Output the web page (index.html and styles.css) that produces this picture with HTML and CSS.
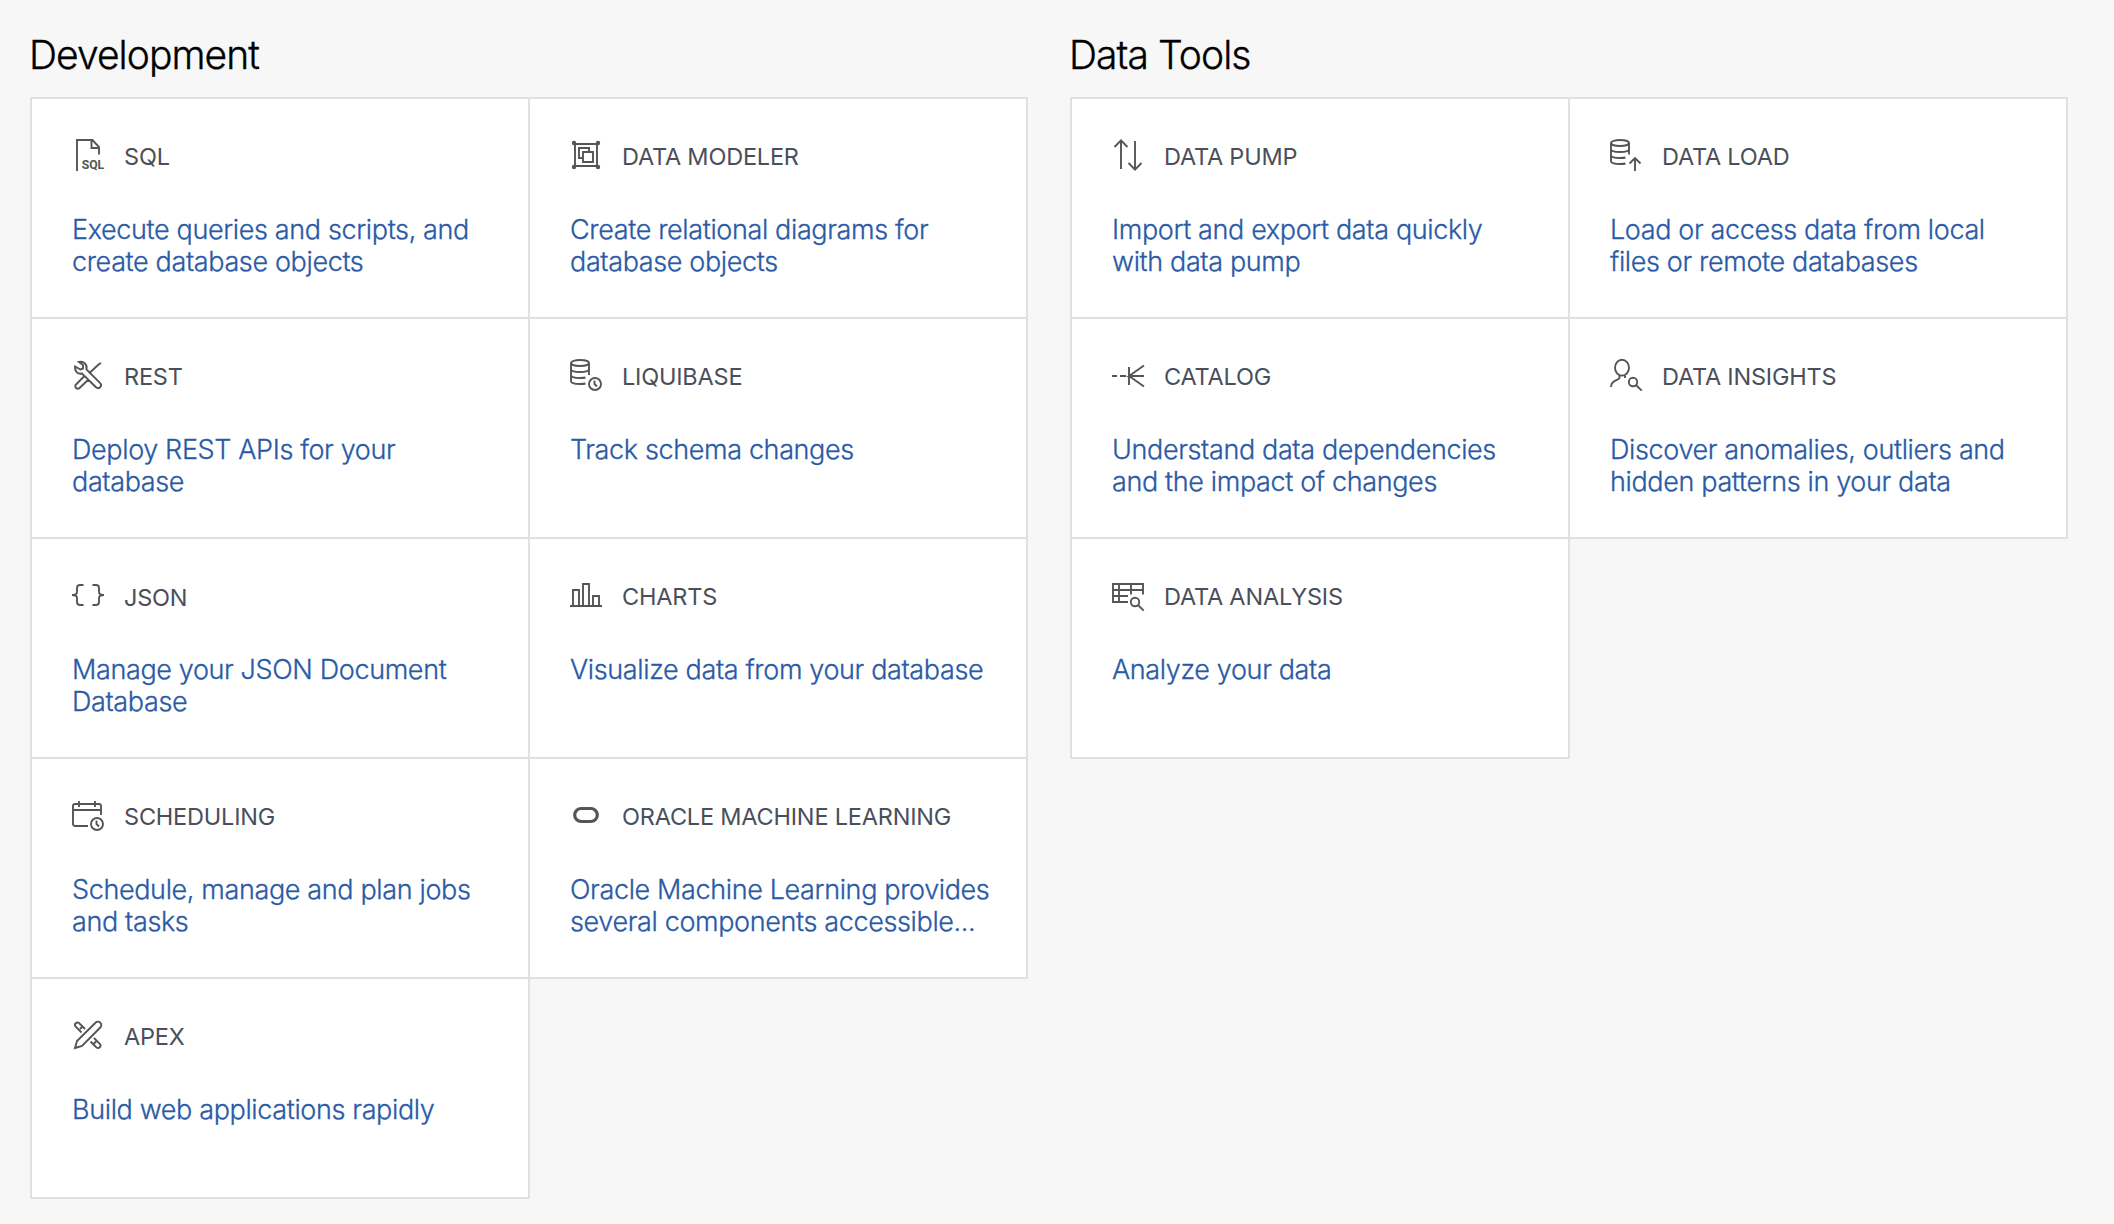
FILE: index.html
```html
<!DOCTYPE html>
<html lang="en">
<head>
<meta charset="utf-8">
<title>Database Actions</title>
<link rel="stylesheet" href="styles.css">
</head>
<body>
<main class="launchpad">
  <section class="group">
    <h2 class="group-title">Development</h2>
    <div class="cards">
      <a class="card">
        <div class="card-head">
          <svg class="icon" viewBox="0 0 32 32"><path d="M5 32V1h15.500L27 8v7.500M19.500 1v8H27"/><text class="icon-label" x="9.700" y="30" textLength="22.500" lengthAdjust="spacingAndGlyphs">SQL</text></svg>
          <span class="card-title">SQL</span>
        </div>
        <p class="card-text">Execute queries and scripts, and create database objects</p>
      </a>
      <a class="card">
        <div class="card-head">
          <svg class="icon" viewBox="0 0 32 32"><path d="M5 5h22v22H5zM13 19H9V9h10v4M13 13h10v10H13z"/><g class="solid"><circle cx="4" cy="4" r="2.200"/><circle cx="28" cy="4" r="2.200"/><circle cx="4" cy="28" r="2.200"/><circle cx="28" cy="28" r="2.200"/></g></svg>
          <span class="card-title">DATA MODELER</span>
        </div>
        <p class="card-text">Create relational diagrams for database objects</p>
      </a>
      <a class="card">
        <div class="card-head">
          <svg class="icon" viewBox="0 0 32 32"><path d="M7 3l4 3v3.500L8.500 10.500 3 7.500C2.500 12 5.500 15.500 10 14.500L24 28.200a2.800 2.800 0 0 0 4.200-4L14.500 10.500C15.500 5.500 12 2 7 3zM29 4l-2.500 1.500L17 14.500M12 17.500L4 25.500a2.300 2.300 0 0 0 3.500 3.500L16.500 20.500"/></svg>
          <span class="card-title">REST</span>
        </div>
        <p class="card-text">Deploy REST APIs for your database</p>
      </a>
      <a class="card">
        <div class="card-head">
          <svg class="icon" viewBox="0 0 32 32"><ellipse cx="10" cy="4" rx="9" ry="3"/><path d="M1 4v18c0 2 4 3 9 3 2 0 4 0 5.500-.5M19 4v12M1 10c0 2 4 3 9 3s9-1 9-3M1 16c0 2 4 3 9 3 2 0 4 0 5.500-.5"/><circle cx="25" cy="25" r="6"/><path d="M24.500 21.500v3.500l2.500 2.500"/></svg>
          <span class="card-title">LIQUIBASE</span>
        </div>
        <p class="card-text">Track schema changes</p>
      </a>
      <a class="card">
        <div class="card-head">
          <svg class="icon" viewBox="0 0 32 32"><path d="M11.500 6H8a3 3 0 0 0-3 3v4c0 2-1.500 3-5 3 3.500 0 5 1 5 3v4a3 3 0 0 0 3 3h3.500M20.500 6H24a3 3 0 0 1 3 3v4c0 2 1.500 3 5 3-3.500 0-5 1-5 3v4a3 3 0 0 1-3 3h-3.500"/></svg>
          <span class="card-title card-title-low">JSON</span>
        </div>
        <p class="card-text">Manage your JSON Document Database</p>
      </a>
      <a class="card">
        <div class="card-head">
          <svg class="icon" viewBox="0 0 32 32"><path d="M0 27h32M3 27V11h6v16M13 27V5h6v22M23 27V17h6v10"/></svg>
          <span class="card-title">CHARTS</span>
        </div>
        <p class="card-text">Visualize data from your database</p>
      </a>
      <a class="card">
        <div class="card-head">
          <svg class="icon" viewBox="0 0 32 32"><path d="M16 27H3a2 2 0 0 1-2-2V7a2 2 0 0 1 2-2h24a2 2 0 0 1 2 2v9M1 11h28M7 2v6M23 2v6"/><circle cx="25" cy="25" r="6"/><path d="M24.500 21.500v3.500l2.500 2.500"/></svg>
          <span class="card-title">SCHEDULING</span>
        </div>
        <p class="card-text">Schedule, manage and plan jobs and tasks</p>
      </a>
      <a class="card">
        <div class="card-head">
          <svg class="icon" viewBox="0 0 32 32"><rect class="thick" x="4.700" y="9.500" width="22.600" height="13" rx="6.500"/></svg>
          <span class="card-title">ORACLE MACHINE LEARNING</span>
        </div>
        <p class="card-text">Oracle Machine Learning provides several components accessible...</p>
      </a>
      <a class="card">
        <div class="card-head">
          <svg class="icon" viewBox="0 0 32 32"><path d="M3 29l2-7L23.500 3.700a3 3 0 0 1 4.800 4.800L10 27zM13 10L7 4a2.500 2.500 0 0 0-3.500 3.500l6 6M8 10l2.500-2.500M22 19l6 6a2.500 2.500 0 0 1-3.500 3.500l-6-6M21.500 25l2.500-2.500"/></svg>
          <span class="card-title">APEX</span>
        </div>
        <p class="card-text">Build web applications rapidly</p>
      </a>
    </div>
  </section>

  <section class="group">
    <h2 class="group-title">Data Tools</h2>
    <div class="cards">
      <a class="card">
        <div class="card-head">
          <svg class="icon" viewBox="0 0 32 32"><path d="M9 30V1M2.500 8L9 1.300 15.500 8M23 2v29M16.500 24l6.500 6.700 6.500-6.700"/></svg>
          <span class="card-title">DATA PUMP</span>
        </div>
        <p class="card-text">Import and export data quickly with data pump</p>
      </a>
      <a class="card">
        <div class="card-head">
          <svg class="icon" viewBox="0 0 32 32"><ellipse cx="10" cy="4" rx="9" ry="3"/><path d="M1 4v18c0 2 4 3 9 3 2 0 4 0 5.500-.5M19 4v11.500M1 10c0 2 4 3 9 3s9-1 9-3M1 16c0 2 4 3 9 3 2 0 4 0 5.500-.5M25 32V19.500M19.500 24.500l5.500-5.500 5.500 5.500"/></svg>
          <span class="card-title">DATA LOAD</span>
        </div>
        <p class="card-text">Load or access data from local files or remote databases</p>
      </a>
      <a class="card">
        <div class="card-head">
          <svg class="icon" viewBox="0 0 32 32"><path d="M0 17h5M8 17h6M17 8v18M32 17H17L32 6.500M17 17l15 10.500"/></svg>
          <span class="card-title">CATALOG</span>
        </div>
        <p class="card-text">Understand data dependencies and the impact of changes</p>
      </a>
      <a class="card">
        <div class="card-head">
          <svg class="icon" viewBox="0 0 32 32"><ellipse cx="12" cy="8.700" rx="7" ry="7.900"/><path d="M9.500 16.500v2.500C9 21.500 1 20.500 1 28M15 16.500V19"/><circle cx="23" cy="23" r="4.200"/><path d="M26 26l5.700 5.700"/></svg>
          <span class="card-title">DATA INSIGHTS</span>
        </div>
        <p class="card-text">Discover anomalies, outliers and hidden patterns in your data</p>
      </a>
      <a class="card">
        <div class="card-head">
          <svg class="icon" viewBox="0 0 32 32"><path d="M16 23H1V5h30v10.500M1 11h30M1 17h15M7 5v18M19 5v10.500"/><circle cx="23" cy="23" r="4.200"/><path d="M26 26l5.700 5.700"/></svg>
          <span class="card-title">DATA ANALYSIS</span>
        </div>
        <p class="card-text">Analyze your data</p>
      </a>
    </div>
  </section>
</main>
</body>
</html>
```
FILE: styles.css
```css
* { box-sizing: border-box; }

body {
  margin: 0;
  background: #f7f7f7;
  color: #000;
  font-family: Inter, "Liberation Sans", sans-serif;
}

.launchpad {
  display: flex;
  align-items: flex-start;
  gap: 42px;
  padding: 31px 30px 0;
}

.group { width: 998px; }

.group-title {
  margin: 0 0 18px -1px;
  font-size: 39px;
  font-weight: 300;
  line-height: 48px;
  letter-spacing: -0.95px;
  -webkit-text-stroke: 0.35px currentColor;
}

/* Neighbouring cards share one 2px border */
.cards {
  display: grid;
  grid-template-columns: repeat(2, 498px);
  grid-auto-rows: 220px;
  padding: 0 2px 2px 0;
}

.card {
  width: 500px;
  height: 222px;
  padding: 40px 36px 0 40px;
  border: 2px solid #e0e0e0;
  background: #fff;
}

.card-head {
  display: flex;
  gap: 20px;
  height: 32px;
}

.icon {
  flex: none;
  width: 32px;
  height: 32px;
  overflow: visible;
  fill: none;
  stroke: #555;
  stroke-width: 1.9;
}

.icon .solid { fill: #555; stroke: none; }
.icon .thick { stroke-width: 3.2; }

.icon-label {
  fill: #555;
  stroke: none;
  font: 700 13.500px Roboto, "Liberation Sans", sans-serif;
}

.card-title {
  padding-top: 2px;
  color: #4a4f5a;
  font-size: 23.500px;
  font-weight: 400;
  line-height: 32px;
  letter-spacing: -0.2px;
  white-space: nowrap;
}

.card-title-low { padding-top: 3px; }

.card-text {
  margin: 43px 0 0;
  color: #2a5aa5;
  font-size: 27px;
  font-weight: 300;
  line-height: 32px;
  letter-spacing: -0.37px;
  -webkit-text-stroke: 0.3px currentColor;
}
```
